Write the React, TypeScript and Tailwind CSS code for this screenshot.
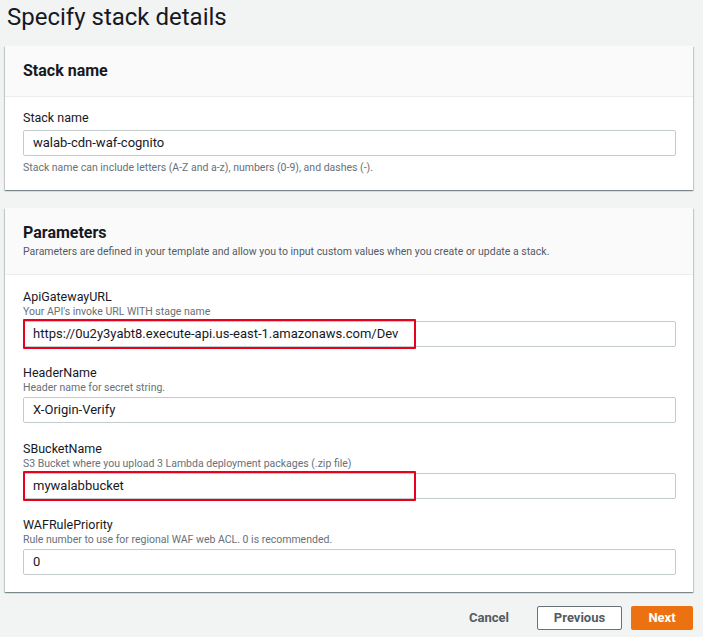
import React from "react";

const font = { fontFamily: 'Roboto, "Noto Sans", sans-serif' };

const cardShadow =
  "shadow-[0_1px_1px_0_rgba(0,28,36,0.3),1px_1px_1px_0_rgba(0,28,36,0.15),-1px_1px_1px_0_rgba(0,28,36,0.15)]";

function Field({
  label,
  help,
  value,
  highlight,
}: {
  label: string;
  help: string;
  value: string;
  highlight?: boolean;
}) {
  return (
    <div className="flex flex-col">
      <div className="text-[12.5px] leading-[16px] text-[#16191f]">{label}</div>
      <div className="text-[10.5px] leading-[14px] text-[#687078]">{help}</div>
      <div className="relative mt-[2px]">
        <div className="h-[26px] border border-[#c3cccc] bg-white rounded-[2px] flex items-center px-[9px] text-[13px] text-[#16191f]">
          {value}
        </div>
        {highlight && (
          <div className="absolute left-0 top-[-2px] h-[30px] w-[393px] border-2 border-[#e8001c] rounded-[1px]" />
        )}
      </div>
    </div>
  );
}

export default function App() {
  return (
    <div className="w-[703px] h-[637px] bg-[#f2f3f3] overflow-hidden" style={font}>
      <h1 className="pl-[7px] pt-[2px] h-[46px] text-[24px] leading-[30px] text-[#16191f]">Specify stack details</h1>

      <div className={`ml-[5px] w-[688px] bg-white ${cardShadow}`}>
        <div className="h-[51px] bg-[#fafafa] border-b border-[#eaeded] flex items-center pl-[18px] pr-[17px]">
          <div className="text-[16px] font-bold text-[#16191f]">Stack name</div>
        </div>
        <div className="pl-[18px] pr-[17px] pt-[13px] pb-[15px]">
          <div className="text-[12.5px] leading-[16px] text-[#16191f]">Stack name</div>
          <div className="mt-[4px] h-[26px] border border-[#c3cccc] rounded-[2px] bg-white flex items-center px-[9px] text-[13px] text-[#16191f]">
            walab-cdn-waf-cognito
          </div>
          <div className="mt-[5px] text-[10.5px] leading-[14px] text-[#687078]">
            Stack name can include letters (A-Z and a-z), numbers (0-9), and dashes (-).
          </div>
        </div>
      </div>

      <div className={`ml-[5px] mt-[18px] w-[688px] bg-white ${cardShadow}`}>
        <div className="h-[67px] bg-[#fafafa] border-b border-[#eaeded] pl-[18px] pr-[17px] pt-[15px]">
          <div className="text-[16px] leading-[20px] font-bold text-[#16191f]">Parameters</div>
          <div className="mt-[2px] text-[10.5px] leading-[14px] text-[#545b64]">
            Parameters are defined in your template and allow you to input custom values when you create or update a stack.
          </div>
        </div>
        <div className="pl-[18px] pr-[17px] pt-[14px] pb-[17px] flex flex-col gap-[18px]">
          <Field
            label="ApiGatewayURL"
            help="Your API's invoke URL WITH stage name"
            value="https://0u2y3yabt8.execute-api.us-east-1.amazonaws.com/Dev"
            highlight
          />
          <Field label="HeaderName" help="Header name for secret string." value="X-Origin-Verify" />
          <Field
            label="SBucketName"
            help="S3 Bucket where you upload 3 Lambda deployment packages (.zip file)"
            value="mywalabbucket"
            highlight
          />
          <Field
            label="WAFRulePriority"
            help="Rule number to use for regional WAF web ACL. 0 is recommended."
            value="0"
          />
        </div>
      </div>

      <div className="flex justify-end items-center mt-[14px] pr-[10px]">
        <button className="text-[13px] font-bold text-[#545b64] h-[24px] mr-[28px]">Cancel</button>
        <button className="h-[24px] w-[85px] border border-[#687078] rounded-[2px] bg-white text-[13px] font-bold text-[#545b64] mr-[9px]">
          Previous
        </button>
        <button className="h-[24px] w-[62px] bg-[#ec7211] rounded-[2px] text-[13px] font-bold text-white">Next</button>
      </div>
    </div>
  );
}
